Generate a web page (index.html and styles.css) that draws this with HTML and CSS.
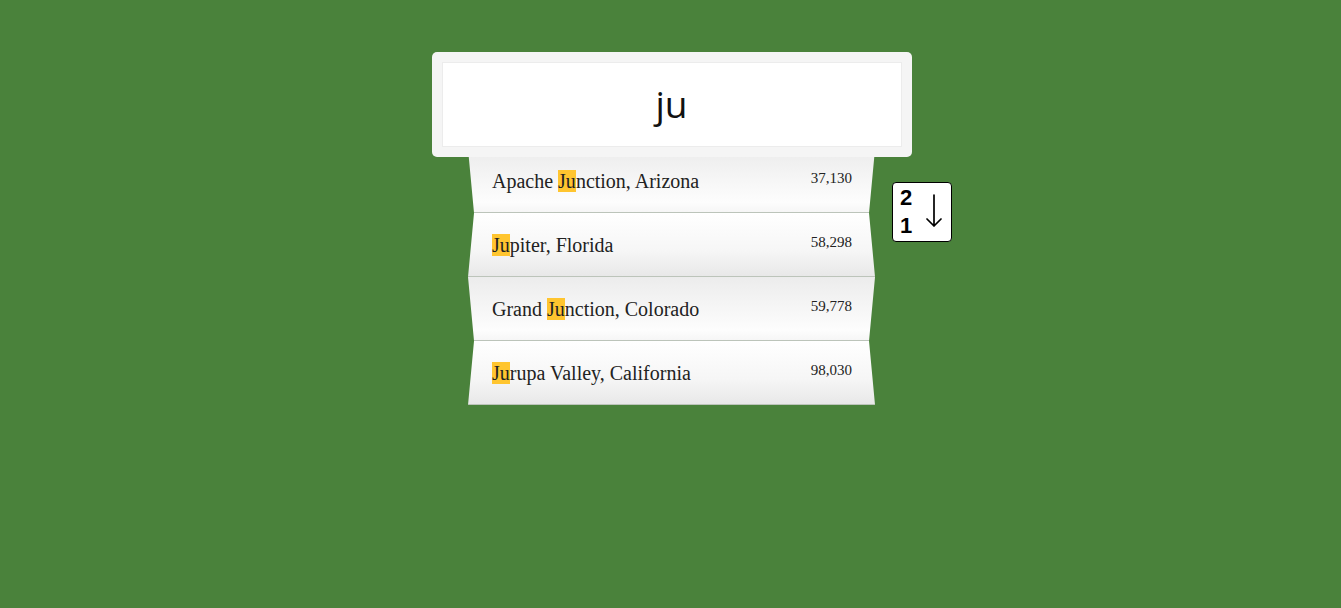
FILE: index.html
```html
<!DOCTYPE html>
<html lang="en">
<head>
<meta charset="utf-8">
<title>City search</title>
<link rel="stylesheet" href="styles.css">
</head>
<body>
<main class="page">
  <div class="search">
    <div class="search-input">ju</div>
  </div>
  <div class="list-row">
    <ul class="results">
      <li class="row odd"><span class="name">Apache <mark class="hl">Ju</mark>nction, Arizona</span><span class="pop">37,130</span></li>
      <li class="row even"><span class="name"><mark class="hl">Ju</mark>piter, Florida</span><span class="pop">58,298</span></li>
      <li class="row odd"><span class="name">Grand <mark class="hl">Ju</mark>nction, Colorado</span><span class="pop">59,778</span></li>
      <li class="row even"><span class="name"><mark class="hl">Ju</mark>rupa Valley, California</span><span class="pop">98,030</span></li>
    </ul>
    <button class="sort" type="button" aria-label="Sort descending">
      <span class="digits"><span>2</span><span>1</span></span>
      <svg class="arrow" width="16" height="34" viewBox="0 0 16 34" aria-hidden="true">
        <path d="M8 1 V32 M1 25 L8 32 L15 25" fill="none" stroke="#000" stroke-width="1.7" stroke-linecap="round" stroke-linejoin="round"/>
      </svg>
    </button>
  </div>
</main>
</body>
</html>
```
FILE: styles.css
```css
html, body {
  margin: 0;
  padding: 0;
}

body {
  background: #4a823b;
  min-height: 608px;
  font-family: "Liberation Serif", "Times New Roman", serif;
}

.page {
  display: flex;
  flex-direction: column;
  align-items: center;
  padding: 52px 0 0 2px;
}

.search {
  position: relative;
  z-index: 2;
  box-sizing: border-box;
  width: 480px;
  height: 105px;
  padding: 10px;
  background: #f5f5f5;
  border-radius: 5px;
}

.search-input {
  box-sizing: border-box;
  height: 85px;
  background: #fff;
  border: 1px solid #ececec;
  display: flex;
  align-items: center;
  justify-content: center;
  font-family: "Open Sans", "Liberation Sans", sans-serif;
  font-size: 37px;
  color: #111;
  padding-bottom: 2px;
}

.list-row {
  display: grid;
  grid-template-columns: 1fr 407px 1fr;
  width: 100%;
  margin-top: -8px;
}

.results {
  grid-column: 2;
  list-style: none;
  margin: 0;
  padding: 0;
}

.row {
  box-sizing: border-box;
  height: 64px;
  padding: 21px 23px 0 24px;
  display: flex;
  justify-content: space-between;
  align-items: flex-start;
  border-bottom: 1px solid #bcc4ba;
  color: #222;
}

.row.odd {
  background: linear-gradient(#ececec, #fdfdfd 85%, #f6f6f6);
  clip-path: polygon(0 0, 100% 0, calc(100% - 6px) 100%, 6px 100%);
}

.row.even {
  background: linear-gradient(#ffffff, #f6f6f6 60%, #e8e8e8);
  clip-path: polygon(6px 0, calc(100% - 6px) 0, 100% 100%, 0 100%);
}

.name {
  font-size: 20px;
  line-height: 23px;
}

.hl {
  background: #ffc52f;
  color: inherit;
  padding: 0;
}

.pop {
  font-size: 15px;
  line-height: 17px;
  color: #222;
}

.sort {
  grid-column: 3;
  justify-self: start;
  align-self: start;
  margin: 33px 0 0 17px;
  box-sizing: border-box;
  width: 60px;
  height: 60px;
  padding: 0 0 0 7px;
  background: #fff;
  border: 1px solid #000;
  border-radius: 4px;
  display: flex;
  align-items: center;
  gap: 14px;
  cursor: pointer;
}

.digits {
  display: flex;
  flex-direction: column;
  font-family: "Liberation Sans", Arial, sans-serif;
  font-weight: bold;
  font-size: 22px;
  line-height: 28px;
  color: #000;
}

.arrow {
  display: block;
  margin-top: -2px;
}
```
